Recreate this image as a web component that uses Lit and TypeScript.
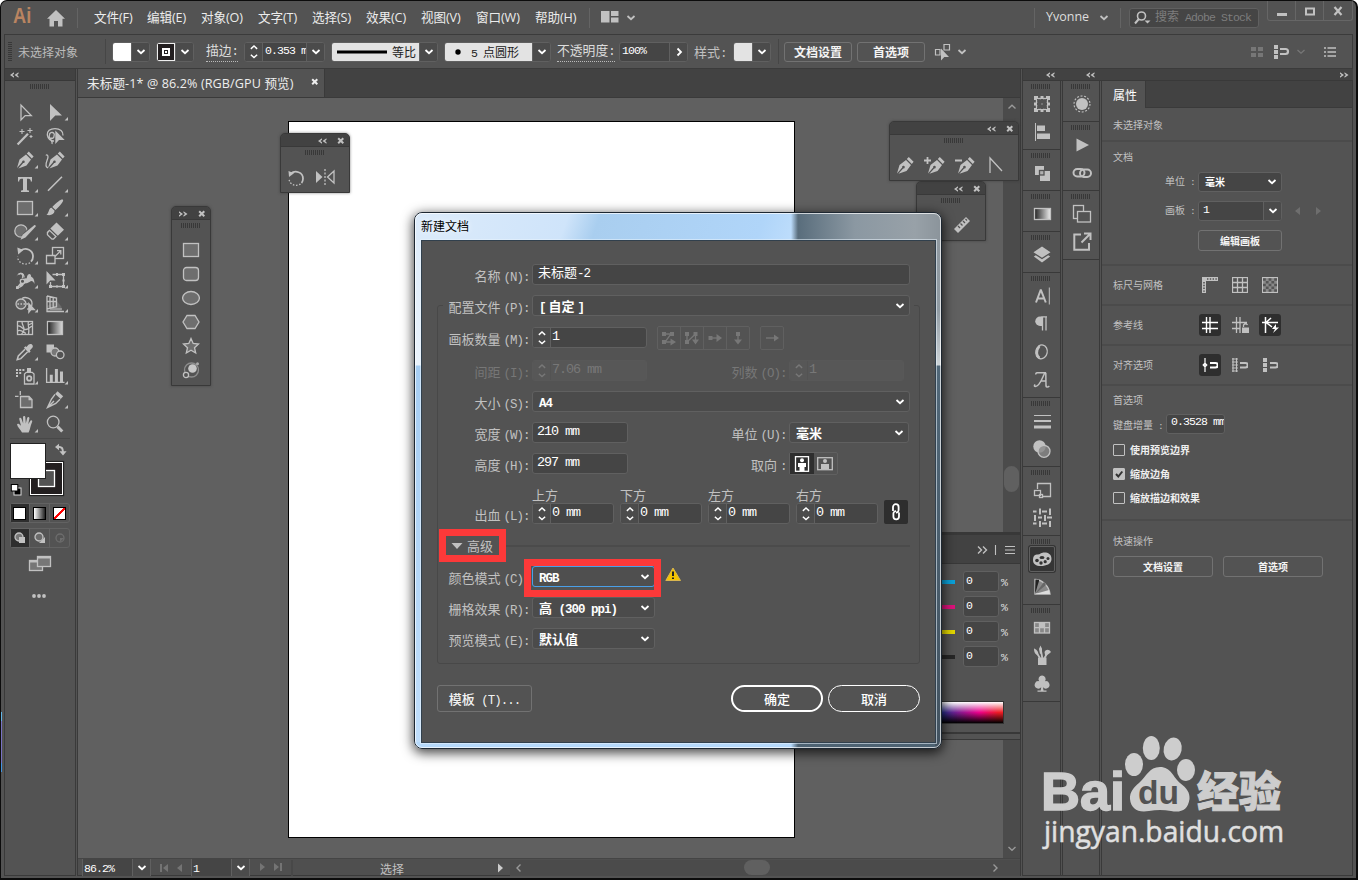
import { LitElement, html, svg, css, SVGTemplateResult } from "lit";
import { customElement, property } from "lit/decorators.js";

// Splits mixed text so that Latin runs take half the width of a CJK glyph.
const t = (s: string) =>
  s.split(/([\x20-\x7e]+)/).filter(Boolean).map((p) =>
    /^[\x20-\x7e]/.test(p) ? html`<span class="l">${p}</span>` : p);

const pic = (w: number, h: number, body: SVGTemplateResult, cls = "") =>
  html`<svg class=${cls} width=${w} height=${h} viewBox="0 0 ${w} ${h}" fill="none" stroke="currentColor" stroke-width="1.3">${body}</svg>`;

const F = (d: string) => svg`<path d=${d} fill="currentColor" stroke="none"/>`;
const S = (d: string, w = 1.3) => svg`<path d=${d} stroke-width=${w}/>`;

const chev = (dir = "down", bold = 1.8) => {
  const d = { down: "M1.5 3L5 6.2L8.5 3", up: "M1.5 6.5L5 3.3L8.5 6.5", right: "M3.5 1.5L7 5L3.5 8.5", left: "M6.5 1.5L3 5L6.5 8.5" }[dir] as string;
  return pic(10, 10, S(d, bold), "chev");
};
const dbl = (right = false) => pic(9, 6, F(right
  ? "M0 .3L4 3L0 5.7V4.2L1.5 3L0 1.8ZM4.5 .3L8.5 3L4.5 5.7V4.2L6 3L4.5 1.8Z"
  : "M4 .3L0 3L4 5.7V4.2L2.5 3L4 1.8ZM8.5 .3L4.5 3L8.5 5.7V4.2L7 3L8.5 1.8Z"));
const cross = pic(8, 8, S("M1.2 1.2L6.3 6.3M6.3 1.2L1.2 6.3", 2));

const shared = css`
  :host { box-sizing: border-box; font-family: "Noto Sans CJK SC", sans-serif; color: #c1c1c1; }
  *, *::before, *::after { box-sizing: border-box; }
  svg { display: block; flex: none; }
  .l { font-family: "Liberation Mono", monospace; font-size: 0.96em; letter-spacing: -0.079em; white-space: pre; }
  .grip { width: 20px; height: 5px; background: repeating-linear-gradient(90deg, #383838 0 1px, transparent 1px 2px); }
  .field { display: flex; align-items: center; height: 21px; border: 1px solid #606060; border-radius: 3px; background: #454545; color: #fff; white-space: nowrap; overflow: hidden; }
  .field > .txt { flex: 1; padding-left: 4px; line-height: 14px; margin-top: -5px; overflow: hidden; }
  .field > .arrow { width: 18px; align-self: stretch; display: flex; align-items: center; justify-content: center; border-left: 1px solid #606060; background: #4b4b4b; }
  .spin { width: 18px; align-self: stretch; display: flex; flex-direction: column; align-items: center; justify-content: center; border-right: 1px solid #606060; background: #4b4b4b; }
  .spin svg { height: 9px; }
`;

const spin = html`<span class="spin">${chev("up", 1.6)}${chev("down", 1.6)}</span>`;

const pen = "M1 17.5L3.5 9L10 4L15 9L10.5 15L2.4 17.8L7.2 12.4A1.3 1.3 0 1 0 6.2 11.5ZM10.8 3L12.8 1L17.6 5.8L15.8 8Z";

const corner = F("M28 17V20.4H24.6Z");
const tools: Array<[SVGTemplateResult, boolean]> = [
  [S("M11 5V20L15.2 15.6H21.3Z"), false],
  [F("M10 4V21L15.3 15.5H22Z"), true],
  [svg`${S("M7.6 20.4L18 9.8", 2.2)}${S("M12 5V10M9.5 7.5H14.5M20 4V9M17.5 6.5H22.5M21 11V14M19.5 12.5H22.5", 1.1)}`, false],
  [svg`${S("M14 17C11 17 8 15 7.3 11C7 7 10 4.7 15 4.7C20 4.7 23.5 7.5 23 11.5M14 12A2.4 2.4 0 1 1 9.5 11A2.4 2.4 0 1 1 14 12C13.5 16 11 13 10.5 14.5C10.4 17 13 17 12 20")}${F("M15.3 6.5V20L19 16H24.7Z")}`, false],
  [svg`<g transform="translate(6 2.6)">${F(pen)}</g>`, true],
  [svg`<g transform="translate(7 2.6)">${F(pen)}</g>${S("M8 20C3 18 8 12 8 9C8 6.8 6.6 6.5 6 7.5")}`, false],
  [F("M8 5H22V9.5H20.8C20.7 7.3 20 6.8 17 6.8V17.6C17 18.4 17.5 18.5 19 18.6V20H11V18.6C12.5 18.5 13 18.4 13 17.6V6.8C10 6.8 9.3 7.3 9.2 9.5H8Z"), true],
  [S("M8 18.8L22 4.8", 1.6), true],
  [svg`<rect x="7.5" y="5.5" width="15" height="13" fill="#6e6e6e"/>`, true],
  [F("M22.8 3.6C24 4.5 22.5 7.5 15.5 14L12.3 11C17.5 5.5 21.5 2.8 22.8 3.6ZM11.5 11.8L14.6 14.8C14.2 18.5 10.5 20 6.5 18.8C9 17.5 8.5 12.2 11.5 11.8Z"), true],
  [svg`<circle cx="11" cy="11" r="6.2" fill="#6e6e6e"/><path d="M26 5L13.5 17.5" stroke="#535353" stroke-width="6"/>${F("M24.5 5C25.8 4.8 26 6 25.5 6.8L15.5 17.5L10.5 19.8L12.6 14.8Z")}`, true],
  [F("M16.5 2.5L24 9.8L17.8 15.8L10.3 8.5ZM9.5 9.4L16.9 16.6L13.7 19.7H11.7L6.8 14.9V12Z M9.6 11.2L8.1 13L8.1 14.4L12.2 18.4L13.3 18.2L15 16.6Z"), true],
  [svg`${S("M11 6.2C16 3 23 6 23 12.4C23 14.7 22.3 16.3 21 17.7", 1.8)}<path d="M20 18.8C15 22 7.6 19 7.6 12.5" stroke-dasharray="1.5 1.8"/>${F("M7.3 3.4L13.5 6L8.2 10.6Z")}`, true],
  [svg`<rect x="12.5" y="3.5" width="11" height="11"/><path d="M6.5 11.5H15V19.5H6.5Z" fill="#535353"/>${S("M15 12.5L20.5 7M17 6.6H20.8V10.5")}`, true],
  [svg`${S("M7.5 19.5L13 12.500M8.500 6.500C11.500 4 14 7 12.500 10", 1.6)}${F("M6.500 8.500C8 4 13.500 3 14.500 8C15 11 16.500 11.500 17 9C17.500 5 21.500 5 21 8.500C23 9.500 24.500 11 24.500 16C22.800 12.500 21.500 12.500 19.500 14C16.500 16 14.500 14.500 13.500 17C12.500 19 9 20.500 7.500 20.300C10 18.800 10.300 17 10 15.500L15 10L12 6C9.500 5.500 8 6.500 6.500 8.500Z")}<circle cx="12.500" cy="13.300" r="2.2" fill="#535353"/>${F("M6 18.200H8.800V21H6Z")}`, true],
  [svg`${F("M6.5 3V16.5L10.2 12.5H15.5Z")}${S("M12.5 6.5H23.5V18.5H10.5V14")}${F("M22 5H25V8H22ZM22 17H25V20H22ZM9 17H12V20H9ZM16 5H18V8H16ZM16 17.5H18V19.5H16ZM22.5 11.5H24.5V13.5H22.5Z")}`, true],
  [svg`<circle cx="11" cy="12" r="5" fill="#666"/><path d="M12 6.5C15 4.3 22 6 22 11.5C22 15 20 17 17 17.2"/><path d="M7.5 12H19" stroke-dasharray="1.5 1.5"/>${F("M18.2 10V22L21.3 18.2H25.8Z")}`, true],
  [svg`<path d="M16.5 8.5L21.5 14.7V19.5H7V14Z" fill="#6b6b6b" stroke="none"/>${S("M7 4V19.5H24M7 4L16.5 6V14.7L7 16.8M10 4.8V16M13.2 5.4V15.4M7 9.5H16.5")}${S("M10 17H22", 1)}`, true],
  [svg`<rect x="7.5" y="5.5" width="15" height="13"/>${S("M12 5.5C12 9 14 10 14 13.5S11.5 17 11.5 18.5M18.5 5.5C17 8 20 12 18.5 18.5M7.5 10C12 9 12 14 16 13.5S20 10 22.5 10.5M7.5 15C11 13 13 16 16 17.5M18.5 9L22.5 7")}`, false],
  [svg`<rect x="7.5" y="5.5" width="15" height="13" fill="url(#gg)"/><defs><linearGradient id="gg"><stop stop-color="#222"/><stop offset="1" stop-color="#ddd"/></linearGradient></defs>`, false],
  [svg`${F("M18.4 4.8C20.8 2.5 24 5 22.5 7.6L19.8 10.4L20.6 11.4L19 13L13.9 7.8L15.5 6.3L16.5 7Z")}${S("M15 9.2L8.3 16L7.2 19.7L10.8 18.6L17.7 11.7", 1.5)}`, true],
  [svg`${F("M6.5 4.5H14V8L10.5 12.5H6.5Z")}<circle cx="15" cy="12" r="4" fill="#777"/><circle cx="20.2" cy="14.8" r="3.8" fill="#535353"/>`, false],
  [svg`${F("M6 5H8V7H6ZM9.2 5H11.2V7H9.2ZM12.4 5H14.4V7H12.4ZM6 8H8V10H6ZM9.2 8H11.2V10H9.2ZM6 11H8V13H6ZM17 4H21V8H17Z")}<path d="M14.5 20V10L16.3 8.3H22.2L24 10V20Z"/><circle cx="19.2" cy="14.4" r="2.2" stroke-width="1.8"/>`, true],
  [svg`${S("M6.6 4V18.4H24.5")}${F("M9.8 10.8H12.8V18H9.8ZM14.9 5H17.9V18H14.9ZM20 7.5H23V18H20Z")}`, true],
  [svg`${S("M10.3 3V7M5 8.4H8.5", 1.3)}<path d="M10.5 8.5H19L22 11.5V19.5H10.5Z" fill="#6e6e6e"/>${F("M18.5 8V12.3H22.5Z")}`, false],
  [svg`${F("M17.5 3.2L23.2 8.3L20.7 11L15.2 6Z")}${S("M15 6.4L11.5 11L7.5 19.5L15.8 15.5L20 11.2M8 19L14 13", 1.4)}`, true],
  [F("M12 20.5C10.8 17.8 7.5 15 7 12.5C7.3 11.2 9 11.3 11 13.8L9.2 7C9.2 5.4 11 5.4 11.4 6.6L13.2 11.6L13 5C13.2 3.5 15.2 3.5 15.3 5L15.8 11.4L17.3 5.6C18 4.4 19.6 4.9 19.4 6.4L18.2 12.2L20.4 8.8C21.5 7.7 22.8 8.8 22 10.2C20.5 13.5 20.3 17 18.6 20.5Z"), true],
  [svg`<circle cx="13.2" cy="10" r="5.8"/>${S("M17.5 14.6L22.3 19.5", 3)}`, false],
];

@customElement("tool-panel")
class ToolPanel extends LitElement {
  static styles = [shared, css`
    :host { display: flex; flex-direction: column; width: 72px; background: #535353; border: 1px solid #3a3a3a; border-top: none; }
    .head { height: 12px; background: #424242; border-bottom: 1px solid #383838; padding: 3px 5px; flex: none; }
    .grip { margin: 3px 0 11px 25px; flex: none; }
    .tools { display: grid; grid-template-columns: 30px 30px; grid-auto-rows: 24px; margin-left: 5px; }
    .rule { height: 1px; background: #484848; margin: 2px 5px 4px; flex: none; }
    .colors { height: 60px; margin-left: 5px; flex: none; }
    .trio { display: grid; grid-template-columns: 19px 20px 19px; height: 20px; margin: 0 0 5px 5px; width: 60px; border: 1px solid #626262; border-radius: 3px; flex: none; }
    .trio > span { display: flex; align-items: center; justify-content: center; border-right: 1px solid #626262; }
    .trio > span:first-child { background: #2e2e2e; }
    .trio > span:last-child { border: none; }
    .sw { width: 13px; height: 13px; border: 1px solid #000; margin-left: -1px; }
    .white { background: #fff; } .grad { background: linear-gradient(90deg, #fff, #222); }
    .none { background: linear-gradient(135deg, #fff 41%, #f00 41% 59%, #fff 59%); }
    .screen { margin: 2px 0 0 23px; } .more { margin: 20px 0 0 27px; }
  `];
  render() {
    return html`
      <div class="head">${dbl()}</div><div class="grip"></div>
      <div class="tools">${tools.map(([b, c]) => pic(30, 24, svg`${b}${c ? corner : null}`))}</div>
      <div class="rule"></div>
      <div class="colors">${pic(60, 60, svg`
        <rect x="19.5" y="18.5" width="34" height="34" fill="#231f20" stroke="#222"/><rect x="20.5" y="19.5" width="32" height="32" stroke="#fff" stroke-width="1"/>
        <rect x="28.5" y="27.5" width="16" height="16" fill="#535353" stroke="#fff"/>
        <rect x=".5" y=".5" width="35" height="35" fill="#fff" stroke="#222" stroke-width="1"/>
        <path d="M47.5 3.8C52 3.8 53 5 53 10" stroke-width="2"/>${F("M45 4L49 .8V7.2ZM53 12.4L49.4 8.3H56.6Z")}
        <rect x="4" y="45" width="7" height="7" fill="#000" stroke="#ddd" stroke-width="1"/><rect x="1.3" y="41.5" width="6.5" height="6.5" fill="#fff" stroke="#000" stroke-width="1"/>`)}</div>
      <div class="trio"><span><i class="sw white"></i></span><span><i class="sw grad"></i></span><span><i class="sw none"></i></span></div>
      <div class="trio">
        <span>${pic(12, 12, svg`<circle cx="5" cy="5" r="4" fill="#777"/>${F("M5 5H11V11H5Z")}`)}</span>
        <span>${pic(12, 12, svg`${F("M5 11L11 5V11Z")}<circle cx="5" cy="5" r="4" fill="#6b6b6b"/>`)}</span>
        <span>${pic(12, 12, svg`<circle cx="6" cy="6" r="4" stroke="#6d6d6d"/><path d="M6 6H10L6 10Z" fill="#6d6d6d" stroke="none"/>`)}</span>
      </div>
      ${pic(24, 18, svg`<rect x="1.5" y="5.5" width="13" height="10" fill="#777"/><path d="M1 6.5H15" stroke-width="2"/><rect x="9.5" y="1.5" width="13" height="10" fill="#777"/><path d="M9 2.5H23" stroke-width="2"/>`, "screen")}
      ${pic(16, 6, svg`${[2, 7, 12].map((x) => svg`<circle cx=${x} cy="3" r="1.9" fill="currentColor" stroke="none"/>`)}`, "more")}`;
  }
}

const iA: SVGTemplateResult[][] = [
  [
    svg`<rect x="8.5" y="8.5" width="11" height="11"/>${F("M6 6H10V10H6ZM12.5 6H15.5V10H12.5ZM18 6H22V10H18ZM6 12.5H10V15.5H6ZM18 12.5H22V15.5H18ZM6 18H10V22H6ZM12.5 18H15.5V22H12.5ZM18 18H22V22H18ZM13.4 13.4H14.6V14.6H13.4Z")}<g fill="#535353" stroke="none"><path d="M9 9H10V10H9ZM12.500 9H15.500V10H12.500ZM18 9H19V10H18ZM9 12.500H10V15.500H9ZM18 12.500H19V15.500H18ZM9 18H10V19H9ZM12.500 18H15.500V19H12.500ZM18 18H19V19H18Z"/></g>`,
    svg`${S("M7.5 5V23", 1)}${F("M9 7.5H17V13H9ZM9 15.5H22V21H9Z")}`,
  ],
  [svg`${F("M7 7H16V16H7ZM12 12H22V22H12Z")}<rect x="11.5" y="11.5" width="4.5" height="4.5" fill="#b0b0b0" stroke="#535353"/>`],
  [svg`<defs><linearGradient id="ga"><stop stop-color="#222"/><stop offset="1" stop-color="#eee"/></linearGradient></defs><rect x="6.5" y="8.5" width="16" height="11" fill="url(#ga)"/>`],
  [F("M14 5.5L22.5 11.2L14 16.8L5.5 11.2ZM5.8 15.5L7.8 14.2L14 18.2L20.2 14.2L22.2 15.5L14 21.5Z")],
  [
    svg`<path d="M8 20.5L12.6 8.2H13L17.8 20.5M9.5 16.5H16.5" stroke-width="2"/>${S("M21.3 5.5V22.5", 1)}`,
    svg`${F("M12 6.5A4.7 4.7 0 0 0 12 16H14V6.5Z")}${S("M13.5 6.8H19M14.5 7V20.5M18 7V20.5", 1.3)}`,
    svg`<ellipse cx="13.5" cy="14" rx="5.7" ry="7" transform="rotate(12 14 14)" stroke-width="1.3"/><path d="M11.5 8C7.5 13 8.500 18 11.500 20" stroke-width="2.4"/>`,
    svg`${S("M8 8.5C7 5.8 12 6.8 18 6.8M17.8 6.8L18 20C18.3 21.5 20 21.4 21.3 20M16.8 7C14 12 12 20.5 7.3 20.5C6 20.5 6.2 19 7.3 18.8M12.5 15H18", 1.5)}`,
  ],
  [
    svg`${S("M6 8.5H23", 1)}${S("M6 14H23", 2)}${S("M6 20H23", 3)}`,
    svg`<circle cx="11.5" cy="11.5" r="6.2" fill="currentColor" stroke="none"/><circle cx="16" cy="16.3" r="6" fill="#888" fill-opacity=".8"/>`,
  ],
  [
    svg`${S("M9.5 13V7.5H22.5V20.5H15")}<rect x="6.5" y="14.5" width="6" height="5"/><rect x="11.5" y="18.5" width="3" height="3"/>`,
    svg`${S("M12 4.5V10.5M22 4.5V11M7 11V17M17 11V17M12 17V23M22 17V23", 2)}${S("M5 7.5H8.5M14 7.5H19M5 19.5H8.5M14 19.5H19M10 13.5H14M19 13.5H24", 1.8)}`,
  ],
  [
    svg`${F("M5 15C5 8 10 10 12 9C14 7 23.5 6 23.5 14C23.5 19 18 21 13 21C8 21 5 19 5 15Z")}<g fill="#333" stroke="none"><circle cx="9" cy="15.5" r="1.8"/><circle cx="13" cy="18" r="1.7"/><circle cx="17.2" cy="16.7" r="1.6"/><circle cx="20" cy="13.5" r="1.5"/><ellipse cx="14" cy="12.5" rx="2.5" ry="1.5"/></g>`,
    svg`<path d="M7 21V6.5C14 6.5 21 13 22 21Z" fill="#888"/><path d="M7 21L11 8V6.8L7.5 6.5Z" fill="#222" stroke="none"/><path d="M7 21L18 12L16 9Z" fill="#666" stroke="none"/><path d="M7 21L21 17L22 21Z" fill="#ddd" stroke="none"/>`,
  ],
  [
    svg`<rect x="6.5" y="8.5" width="15" height="10.5" fill="#888"/>${S("M11.5 8.5V19M16.5 8.5V19M6.5 13.7H21.5")}${F("M11.5 8.5H16.5V13.5H11.5Z")}`,
    svg`${F("M10 15.5H18.5V23H10Z")}${S("M12 16L8 10M14.3 16L12.5 6M16.5 16L20 10", 1.8)}${F("M6 6.500C8 7 10.500 9 10.500 13C7 13 6 10 6 6.500ZM11 7L12.5 3.500L14 7V11L12 12ZM16.500 10C18 7 21 7 23 10C21 12 18 14 17 13Z")}`,
    F("M14 5.5A3.6 3.6 0 0 1 17 11.2A3.7 3.7 0 1 1 15 17.2L15.5 20.5H18.5V21.7H9.5V20.5H12.7L13.2 17.2A3.7 3.7 0 1 1 11.2 11.2A3.6 3.6 0 0 1 14 5.5Z"),
  ],
];
const iB: SVGTemplateResult[][] = [
  [svg`<circle cx="14" cy="14" r="6" fill="currentColor" stroke="none"/><circle cx="14" cy="14" r="8" stroke-dasharray="2 1.6" stroke-width="1.1"/>`],
  [
    F("M8.5 7.5L21 14L8.5 20.5Z"),
    svg`<g stroke-width="2"><rect x="5.5" y="10" width="11" height="7.500" rx="3.7"/><rect x="12" y="10.5" width="11" height="7.500" rx="3.7"/></g>`,
  ],
  [
    svg`<rect x="5.5" y="5.5" width="10" height="13"/><rect x="9.5" y="11.5" width="13" height="10.5" fill="#535353"/>`,
    svg`${S("M13 6.5H6.3V21.8H21V15", 2)}${S("M13.5 14.5L21.5 6.5M16 5.5H22.5V12", 2)}`,
  ],
];

@customElement("icon-dock")
class IconDock extends LitElement {
  @property({ attribute: false }) groups: SVGTemplateResult[][] = [];
  @property({ type: Number }) active = -1;
  static styles = [shared, css`
    :host { display: block; background: #535353; border-right: 1px solid #393939; }
    .g { border-bottom: 1px solid #393939; padding: 3px 0 3px 8px; }
    .g > .grip { margin-bottom: 1px; }
    .g > svg { margin-left: -3px; }
    .g .on { background: #353535; outline: 1px solid #606060; outline-offset: -2px; border-radius: 3px; }
  `];
  render() {
    return html`${this.groups.map((g, i) => html`<div class="g"><div class="grip"></div>${g.map((b, j) => pic(28, 28, b, i === this.active && j === 0 ? "on" : ""))}</div>`)}`;
  }
}

@customElement("props-panel")
class PropsPanel extends LitElement {
  static styles = [shared, css`
    :host { display: block; background: #535353; font-size: 10px; line-height: 14px; border-right: 1px solid #3a3a3a; border-left: 1px solid #3a3a3a; }
    .tabs { height: 27px; background: #424242; border-bottom: 1px solid #3a3a3a; }
    .tab { width: 44px; height: 27px; background: #535353; border-right: 1px solid #3a3a3a; color: #fff; font-size: 12px; line-height: 27px; padding-left: 11px; }
    section { padding-left: 11px; border-bottom: 2px solid #4b4b4b; }
    section:last-child { border: none; }
    .r { display: flex; align-items: center; }
    .s1 { height: 34px; padding-top: 10px; } .s2 { height: 124px; padding-top: 8px; }
    .row { height: 40px; } .row > span:first-child { width: 86px; }
    .lab { width: 82px; text-align: right; margin-right: 3px; }
    .field { height: 20px; width: 84px; font-size: 12px; } .field b { font-size: 10px; flex: 1; padding-left: 6px; }
    .field > .chev { margin-right: 4px; }
    .m8 { margin-top: 8px; } .m9 { margin-top: 9px; }
    .btn { height: 21px; border: 1px solid #727272; border-radius: 3px; color: #f4f4f4; font-weight: bold; text-align: center; line-height: 19px; }
    .edit { width: 84px; margin: 9px 0 0 85px; }
    .nav { color: #6e6e6e; margin-left: 10px; }
    .ib { width: 22px; height: 22px; margin-right: 8px; display: flex; align-items: center; justify-content: center; border-radius: 3px; }
    .dark { background: #2e2e2e; color: #fff; }
    .s6 { height: 135px; padding-top: 7px; } .kb { margin-top: 6px; } .kb > span { padding-top: 5px; } .kb .field { width: 59px; margin-left: 3px; }
    .ck { color: #eee; font-weight: bold; height: 24px; gap: 5px; }
    .ck i { width: 12px; height: 12px; border: 1px solid #c1c1c1; border-radius: 1px; } .ck .yes { background: #c1c1c1; color: #333; }
    .first { margin-top: 4px; } .s7 { padding-top: 13px; } .pair { gap: 10px; margin-top: 8px; } .pair .btn { width: 100px; }
  `];
  render() {
    const mag = svg`${S("M8 5H13.5A2 2 0 0 1 13.5 9.5H8", 2.2)}`;
    return html`
      <div class="tabs"><div class="tab">属性</div></div>
      <section class="s1">未选择对象</section>
      <section class="s2">文档
        <div class="r m8"><span class="lab">${t("单位 :")}</span><div class="field"><b>毫米</b>${chev()}</div></div>
        <div class="r m9"><span class="lab">${t("画板 :")}</span><div class="field"><span class="txt">${t("1")}</span><span class="arrow">${chev()}</span></div>
          ${pic(32, 10, F("M8 1V9L3 5ZM24 1V9L29 5Z"), "nav")}</div>
        <div class="btn edit">编辑画板</div>
      </section>
      <section class="r row"><span>标尺与网格</span>
        <span class="ib">${pic(16, 16, svg`${S("M0 2H16M2 0V16", 4)}<path d="M5 2H16M2 5V16" stroke="#535353" stroke-width="1.6" stroke-dasharray="1.4 1.4"/>`)}</span>
        <span class="ib">${pic(16, 16, svg`<rect x=".5" y=".5" width="15" height="15"/>${S("M5.5 0V16M10.5 0V16M0 5.5H16M0 10.5H16")}`)}</span>
        <span class="ib">${pic(16, 16, svg`<rect x=".5" y=".5" width="15" height="15" fill="#8a8a8a"/><path d="M1 2.500H15M1 8H15M1 13.500H15" stroke="#555" stroke-width="2.7" stroke-dasharray="2.8 2.8"/><path d="M3.800 5.250H15M3.800 10.750H15" stroke="#555" stroke-width="2.7" stroke-dasharray="2.8 2.8"/>`)}</span></section>
      <section class="r row"><span>参考线</span>
        <span class="ib dark">${pic(16, 16, S("M0 5.5H16M0 11.5H16M4.5 0V16M8 0V16", 1.4))}</span>
        <span class="ib">${pic(17, 16, svg`${S("M0 5.5H15M0 11.5H8M4.5 0V16M8 0V16M11.5 10V8Q14 5.5 15.5 8")}${F("M10 10.5H17V16.5H10Z")}`)}</span>
        <span class="ib dark">${pic(17, 16, svg`${S("M0 5.5H16M3.5 0V16M4 5.5L9 1M4 5.5L10 10", 1.5)}${F("M14 7L10 12H13L11 16L17 10.5H14Z")}`)}</span></section>
      <section class="r row"><span>对齐选项</span>
        <span class="ib dark">${pic(16, 14, svg`${mag}${S("M3 0V14M1.2 7L3 5.2L4.8 7L3 8.800Z", 1.2)}`)}</span>
        <span class="ib">${pic(16, 14, svg`${mag}${S("M1 0V14M4.5 0V14M0 1H6M0 4H6M0 7H6M0 10H6M0 13H6", 1.1)}`)}</span>
        <span class="ib">${pic(16, 14, svg`${mag}${F("M1 0H5V4H1ZM1 5H5V9H1ZM1 10H5V14H1Z")}`)}</span></section>
      <section class="s6">首选项
        <div class="r kb"><span>${t("键盘增量 :")}</span><div class="field"><span class="txt">${t("0.3528 mm")}</span></div></div>
        <div class="r ck first"><i></i>使用预览边界</div>
        <div class="r ck"><i class="yes">${pic(10, 10, S("M2 5L4.3 7.5L8.3 2.5", 2))}</i>缩放边角</div>
        <div class="r ck"><i></i>缩放描边和效果</div>
      </section>
      <section class="s7">快速操作<div class="r pair"><div class="btn">文档设置</div><div class="btn">首选项</div></div></section>`;
  }
}

@customElement("float-panel")
class FloatPanel extends LitElement {
  @property({ type: Boolean }) right = false;
  static styles = [shared, css`
    :host { display: block; background: #535353; border: 1px solid #393939; border-radius: 5px 5px 0 0; box-shadow: 0 0 3px #3339; }
    .h { height: 13px; background: #424242; border-bottom: 1px solid #393939; border-radius: 4px 4px 0 0; display: flex; align-items: center; justify-content: flex-end; gap: 10px; padding: 1px 4px 0 0; }
    .grip { margin: 3px auto 0; }
  `];
  render() { return html`<div class="h">${dbl(this.right)}${cross}</div><div class="grip"></div><slot></slot>`; }
}

@customElement("new-doc-dialog")
class NewDocDialog extends LitElement {
  static styles = [shared, css`
    :host { display: block; border: 1px solid #1d2731; border-radius: 8px; box-shadow: 0 3px 12px 1px #000b; padding: 27px 5px 5px 6px; font-size: 13px;
      background:
        linear-gradient(180deg, #8f989f 0, #909ba3 70px, #ccd3d7 125px, #516879 126px, #41515e 100%) right 0 top 27px / 6px 100% no-repeat,
        linear-gradient(90deg, #b5d9fb 0 376px, #4e6373 383px) bottom / 100% 6px no-repeat,
        linear-gradient(90deg, #fff0 376px, #596d7c 383px, #8b98a2 440px, #98a1a8 500px, #8b949b) 0 0 / 100% 27px no-repeat,
        linear-gradient(110deg, #dcebfa 0, #cfe4fa 145px, #a9ceef 175px, #b0d5f9 330px, #c1dffc 372px) 0 0 / 100% 27px no-repeat,
        linear-gradient(180deg, #dcebfa 0, #eaf3fc 152px, #a6cdf2 153px, #c0defb 100%); }
    .title { position: absolute; left: 6px; top: 4px; color: #000; font-size: 12px; line-height: 18px; text-shadow: 0 0 6px #fff; }
    .frame { position: absolute; inset: 0; border: 1px solid #ffffffb0; border-radius: 7px; }
    .body { position: relative; height: 503px; border: 1px solid #31404d; background: #535353; outline: 1px solid #e8f3fc90; padding: 23px 0 0 15px; }
    .row { display: flex; align-items: center; height: 21px; white-space: nowrap; }
    .row > .lab { width: 94px; text-align: right; padding: 1px 2.5px 0 0; flex: none; }
    .lab .l, .tight .l { word-spacing: -3.5px; }
    .row.name > .lab { width: 95px; }
    .name > .field { width: 378px; } .name > .field > .txt { line-height: 19px; margin-top: -3px; font-size: 13px; padding-left: 5px; }
    fieldset { margin: 20px 0 0; padding: 0; width: 483px; height: 359px; border: 1px solid #484848; border-radius: 3px; min-width: 0; }
    .field > .txt { font-size: 14px; } .field > .spin + .txt { padding-left: 1px; }
    .sel { background: #4b4b4b; font-weight: bold; padding: 0 4px 0 6px; justify-content: space-between; }
    .w1 { width: 378px; } .w2 { width: 115px; } .w3 { width: 96px; } .w4 { width: 82px; } .w5 { width: 120px; } .w6 { width: 123px; }
    .profile { margin: -11px 5px 0; background: #535353; } .row.profile > .lab { width: 89px; }
    .g11 { margin-top: 11px; } .g12 { margin-top: 12px; } .g10 { margin-top: 10px; }
    .dis { color: #777; border-color: #585858; background: #575757; } .dis .spin { background: #575757; border-color: #535353; }
    .lab.off { color: #777; }
    .order { display: flex; margin-left: 10px; border: 1px solid #606060; border-radius: 2px; height: 24px; color: #777; }
    .order > span { width: 23px; border-right: 1px solid #606060; display: flex; align-items: center; justify-content: center; } .order > span:last-child { border: 0; width: 22px; }
    .row > .lab.right { width: 142px; } .row > .lab.far { width: 161px; }
    .ori { display: flex; border: 1px solid #606060; border-radius: 2px; height: 23px; } .ori span { width: 23.5px; display: flex; align-items: center; justify-content: center; }
    .ori span:first-child { background: #2e2e2e; color: #fff; }
    .sides { display: flex; margin: 13px 0 0 94px; height: 16px; line-height: 15px; } .sides span { width: 88px; }
    .bleed > .field { margin-right: 6px; } .link { width: 24px; height: 24px; background: #2e2e2e; border-radius: 2px; color: #fff; display: flex; align-items: center; justify-content: center; margin-top: -4px; }
    .adv { display: flex; align-items: center; height: 33px; margin: 5px 9px 0 1px; } .adv::after { content: ""; flex: 1; height: 2px; background: #4b4b4b; }
    .adv > span { width: 67px; height: 33px; border: 7px solid #fc3939; display: flex; align-items: center; gap: 4px; padding-left: 5px; line-height: 18px; }
    .hot { position: relative; margin-top: 4px; } .hot::after { content: ""; position: absolute; left: 86px; top: -7px; width: 137px; height: 38px; border: 7px solid #fc3939; }
    .hot .field { border: 1.5px solid #4a9fe8; background: #4f4f4f; } .warn { margin: -4px 0 0 10px; }
    .foot { display: flex; margin-top: 21px; width: 483px; color: #fff; line-height: 25px; text-align: center; font-weight: 500; }
    .foot > * { height: 27px; } .tpl { width: 95px; border: 1px solid #727272; border-radius: 3px; margin-right: auto; color: #f2f2f2; }
    .pill { width: 92px; border: 1px solid #fff; border-radius: 14px; margin-left: 5px; } .ok { border-width: 2px; line-height: 23px; }
  `];
  render() {
    const num = (v: string, w: string, off = false) => html`<div class="field ${w} ${off ? "dis" : ""}">${spin}<span class="txt">${t(v)}</span></div>`;
    const sel = (v: string, w: string) => html`<div class="field sel ${w}"><span>${t(v)}</span>${chev()}</div>`;
    const lab = (s: string, c = "") => html`<span class="lab ${c}">${t(s)}</span>`;
    return html`
      <div class="frame"></div><div class="title">新建文档</div>
      <div class="body">
        <div class="row name">${lab("名称 (N):")}<div class="field"><span class="txt">${t("未标题-2")}</span></div></div>
        <fieldset>
          <div class="row profile">${lab("配置文件 (P):")}${sel("[ 自定 ]", "w1 tight")}</div>
          <div class="row g11">${lab("画板数量 (M):")}${num("1", "w2")}
            <div class="order">
              <span>${pic(16, 16, svg`${F("M1 2H5V6H1ZM9 2H13V6H9ZM1 10H5V14H1ZM9.5 8.5L15 12L9.5 15.5Z")}${S("M4 4H10L4 12H10")}`)}</span>
              <span>${pic(16, 16, svg`${F("M1 2H5V6H1ZM9.5 2H13.5V6H9.5ZM1 10H5V14H1ZM8 9.5H15L11.5 14.5Z")}${S("M3 4V12M4 11L11.5 4V10")}`)}</span>
              <span>${pic(16, 16, svg`${F("M1.5 6H5.5V10H1.5ZM9.5 4L15 8L9.5 12Z")}${S("M4 8H11")}`)}</span>
              <span>${pic(16, 16, svg`${F("M6 2H10V6H6ZM4 9.5H12L8 14.5Z")}${S("M8 4V11")}`)}</span></div>
            <div class="order"><span>${pic(14, 14, svg`${F("M9 3.5L14 7L9 10.5Z")}${S("M1 7H11")}`)}</span></div>
          </div>
          <div class="row g12">${lab("间距 (I):", "off")}${num("7.06 mm", "w2", true)}${lab("列数 (O):", "right off")}${num("1", "w2", true)}</div>
          <div class="row g10">${lab("大小 (S):")}${sel("A4", "w1")}</div>
          <div class="row g10">${lab("宽度 (W):")}<div class="field w3"><span class="txt">${t("210 mm")}</span></div>${lab("单位 (U):", "far")}${sel("毫米", "w5")}</div>
          <div class="row g10">${lab("高度 (H):")}<div class="field w3"><span class="txt">${t("297 mm")}</span></div>${lab("取向 :", "far")}
            <div class="ori"><span>${pic(16, 16, svg`<rect x="1.5" y=".7" width="13" height="14.6"/><circle cx="8" cy="4.2" r="2" fill="currentColor" stroke="none"/>${F("M4 7H12V11H10.5V15H5.5V11H4Z")}`)}</span>
            <span>${pic(16, 16, svg`<rect x=".7" y="1.7" width="14.6" height="12"/><circle cx="8" cy="5" r="2" fill="currentColor" stroke="none"/>${F("M4 8H12V13H4Z")}`)}</span></div></div>
          <div class="sides"><span>上方</span><span>下方</span><span>左方</span><span>右方</span></div>
          <div class="row bleed">${lab("出血 (L):")}${[0, 1, 2, 3].map(() => num("0 mm", "w4"))}
            <span class="link">${pic(12, 18, svg`<g stroke-width="1.8"><path d="M3 8V4A2.8 2.8 0 0 1 8.6 4V7A2.5 2.5 0 0 1 6 9.5M9 9.5V13.5A2.8 2.8 0 0 1 3.4 13.5V11A2.5 2.5 0 0 1 6 8.2"/></g>`)}</span></div>
          <div class="adv"><span>${pic(12, 8, F("M.5 1H11.5L6 7Z"))}高级</span></div>
          <div class="row hot">${lab("颜色模式 (C):")}${sel("RGB", "w6")}
            ${pic(17, 15, svg`<path d="M8 1L15.5 13.5H.8Z" fill="#f5c400" stroke="#d9b650" stroke-width="1"/><path d="M8 4.5V9M8 10.5V12" stroke="#222" stroke-width="2"/>`, "warn")}</div>
          <div class="row g10">${lab("栅格效果 (R):")}${sel("高 (300 ppi)", "w6")}</div>
          <div class="row g10">${lab("预览模式 (E):")}${sel("默认值", "w6")}</div>
        </fieldset>
        <div class="foot"><span class="tpl">${t("模板 (T)...")}</span><span class="pill ok">确定</span><span class="pill">取消</span></div>
      </div>`;
  }
}

@customElement("app-root")
class AppRoot extends LitElement {
  static styles = [shared, css`
    :host { display: flex; flex-direction: column; position: relative; width: 1358px; height: 880px; overflow: hidden; background: #535353; border: 1px solid #0c0c0c; border-bottom-width: 2px; border-right-width: 2px; border-radius: 7px 7px 0 0; font-size: 13px; }
    .menu { display: grid; grid-template-columns: 33px 31px 17px 53px 54px 57px 54px 54px 55px 55px 59px 54px 12px 25px 408px 12px 53px 21px 9px 138px 84px; height: 33px; padding-left: 12px; align-items: center; flex: none; }
    .menu .m { font-family: "Open Sans", "Noto Sans CJK SC", sans-serif; color: #ececec; font-size: 12.6px; white-space: nowrap; letter-spacing: -0.1px; margin-top: -3px; }
    .ai { font: bold 22px/30px "Liberation Sans", sans-serif; color: #b98461; transform: scaleX(.83); transform-origin: 0 50%; margin-top: -3px; }
    .vs { width: 1px; height: 20px; background: #646464; }
    .user { color: #ddd; font-family: "Open Sans", sans-serif; font-size: 12.5px; margin-top: -3px; }
    .search { width: 130px; height: 20px; border: 1px solid #606060; border-radius: 3px; background: #454545; display: flex; align-items: center; gap: 4px; padding-left: 4px; font-size: 12px; line-height: 16px; color: #7d7d7d; white-space: nowrap; overflow: hidden; }
    .search svg { color: #c1c1c1; } .search span { margin-top: -1px; }
    .win { align-self: start; display: grid; grid-template-columns: repeat(3, 28px); height: 20px; border: 1px solid #666; border-top: 0; border-radius: 0 0 3px 3px; width: 86px; }
    .win > span { display: flex; align-items: center; justify-content: center; border-right: 1px solid #666; } .win > span:last-child { border: 0; }
    .bar { display: grid; grid-template-columns: 10px 87px 7px 44px 50px 38px 87px 113px 113px 62px 75px 39px 45px 6px 73px 77px 23px 293px 24px 22px 28px 20px; height: 35px; margin: 0 3px; padding-left: 3px; align-items: center; border: 1px solid #3b3b3b; flex: none; white-space: nowrap; }
    .vgrip { width: 4px; height: 20px; background: repeating-linear-gradient(180deg, #383838 0 1px, transparent 1px 2px); }
    .dim { font-size: 12px; color: #bbb; }
    .vd { width: 1px; height: 25px; background: #464646; }
    .dot { color: #ddd; justify-self: start; border-bottom: 1px dotted #bbb; line-height: 17px; font-size: 12.800px; }
    .field { height: 20px; font-size: 12px; } .field > .txt { padding-left: 2px; margin-top: -4px; }
    .c38 { width: 38px; } .c81 { width: 81px; } .c107 { width: 107px; } .c69 { width: 69px; }
    .fill { flex: 1; align-self: stretch; background: #fff; display: flex; align-items: center; justify-content: center; }
    .blk { background: #231f20; border: 1px solid #eee; } .blk i { width: 8px; height: 8px; border: 1px solid #fff; background: #fff; outline: 1px solid #231f20; outline-offset: -3px; }
    .lite { background: #e3e3e3; color: #222; gap: 5px; font-size: 12px; justify-content: flex-end; padding-right: 3px; } .lite.br { gap: 10px; padding-right: 13px; }
    .btn { height: 20px; width: 68px; border: 1px solid #727272; border-radius: 3px; color: #f4f4f4; font-weight: bold; font-size: 12px; text-align: center; line-height: 18px; }
    .work { display: grid; grid-template-columns: 72px 1fr 331px; gap: 1px; margin: 0 3px; height: 807px; flex: none; }
    .doc { display: flex; flex-direction: column; border: 1px solid #3a3a3a; border-top: 0; min-width: 0; }
    .tabs { height: 29px; background: #424242; border-bottom: 1px solid #3a3a3a; flex: none; }
    .tab { width: 247px; height: 28px; background: #535353; border-right: 1px solid #3a3a3a; display: flex; align-items: center; justify-content: space-between; padding: 0 5px 2px 9px; color: #eee; font: 12.6px "Open Sans", "Noto Sans CJK SC", sans-serif; letter-spacing: .1px; white-space: nowrap; }
    .mid { display: flex; flex: 1; min-height: 0; }
    .canvas { position: relative; flex: 1; background: #606060; overflow: hidden; }
    .art { position: absolute; left: 210px; top: 23px; width: 507px; height: 717px; border: 1px solid #000; background: #fff; }
    .vscroll { width: 17px; background: #4b4b4b; display: flex; flex-direction: column; align-items: center; padding: 4px 0; color: #999; }
    .vscroll i { width: 15px; height: 26px; border-radius: 8px; background: #606060; margin: 354px 0 auto; flex: none; }
    .status { display: grid; grid-template-columns: 4px 69px 40px 100px 1fr 17px 510px; height: 17px; border-top: 1px solid #454545; background: #4f4f4f; align-items: center; flex: none; }
    .status .field { height: 17px; width: 69px; border-width: 0 1px; border-radius: 0; } .status .field.p { width: 59px; }
    .status .txt { margin-top: 0; padding-left: 1px; } .status > svg { color: #747474; } .status .mode { text-align: center; border-left: 2px solid #484848; font-size: 12px; padding: 1px 2px 0 0; line-height: 16px; height: 16px; overflow: hidden; }
    .pager { display: flex; } .hs { display: flex; align-items: center; justify-content: space-between; background: #4b4b4b; height: 16px; padding: 0 20px 0 4px; color: #999; } .hs i { width: 26px; height: 15px; border-radius: 8px; background: #606060; }
    .docks { display: flex; flex-direction: column; border: 1px solid #3a3a3a; border-top: 0; border-right: 0; }
    .dh { height: 12px; background: #424242; border-bottom: 1px solid #393939; display: grid; grid-template-columns: 32px 40px 1fr 13px; align-items: center; flex: none; }
    .dh > :nth-child(1), .dh > :nth-child(2) { justify-self: end; }
    .cols { display: grid; grid-template-columns: 38px 1px 38px 1px 1fr; flex: 1; }
    .second { border-left: 1px solid #393939; }
    .floating { position: absolute; }
    .fa { left: 279px; top: 132px; width: 70px; height: 60px; } .fb { left: 170px; top: 205px; width: 40px; height: 180px; } .fc { left: 888px; top: 120px; width: 130px; height: 60px; } .fd { left: 915px; top: 180px; width: 70px; height: 60px; }
    .icons { display: flex; padding: 14px 6px; gap: 10px; } .fc .icons { padding: 13px 6px; gap: 9px; } .fd .icons { padding: 13px 36px; }
    .shapes { display: grid; justify-content: center; grid-auto-rows: 24px; padding-top: 10px; align-items: center; }
    .color { position: absolute; left: 880px; top: 531px; width: 140px; height: 208px; background: #535353; border: 2px solid #383838; border-width: 3px 1px 1px; display: flex; flex-direction: column; }
    .ch { height: 29px; background: #424242; border-bottom: 1px solid #383838; display: flex; align-items: center; justify-content: flex-end; padding: 2px 3px 0 0; margin-bottom: 8px; flex: none; }
    .cr { height: 25px; display: grid; grid-template-columns: 73px 8px 36px 1fr; align-items: start; font-size: 12px; flex: none; } .cr i { height: 4px; margin-top: 8px; } .cr .field { height: 21px; margin-top: -1px; }
    .cr .pc { margin-left: 2px; color: #ddd; line-height: 18px; } .cr:nth-child(2) i { background: #0aa1d9; } .cr:nth-child(3) i { background: #dd127b; } .cr:nth-child(4) i { background: #e2d600; } .cr:nth-child(5) i { background: #262626; }
    .spec { width: 122px; height: 23px; margin-top: 29px; border: 1px solid #333; flex: none; background: linear-gradient(180deg, #fff, #fff0 50%, #0000 50%, #000), linear-gradient(90deg, #00a651, #00aeef 25%, #2e3192 50%, #ec008c 80%, #ed1c24 96%); }
    .color::after { content: ""; margin-top: auto; height: 7px; border-top: 2px solid #383838; }
    .dialog { position: absolute; left: 413px; top: 211px; width: 528px; height: 537px; }
    .mark { position: absolute; left: 1029px; top: 729px; }
    .edge { position: absolute; left: 0; top: 711px; width: 1px; height: 60px; background: #7872c4; border-top: 9px solid #62b6e8; border-bottom: 9px solid #3f94e2; }
  `];
  render() {
    const menu = ["文件(F)", "编辑(E)", "对象(O)", "文字(T)", "选择(S)", "效果(C)", "视图(V)", "窗口(W)", "帮助(H)"];
    const arrow = html`<span class="arrow">${chev()}</span>`;
    return html`
      <div class="menu">
        <span class="ai">Ai</span>${pic(20, 18, F("M10 1L19 9.8H16.5V17.5H12V12H8V17.5H3.5V9.8H1Z"))}<i class="vs"></i>
        ${menu.map((m) => html`<span class="m">${m}</span>`)}
        <i class="vs"></i>${pic(18, 14, F("M0 0H8.5V11.5H0ZM10 0H17.5V5H10ZM10 6.5H17.5V11.5H10Z"))}${chev()}
        <i class="vs"></i><span class="user">Yvonne</span>${chev()}<i class="vs"></i>
        <div class="search">${pic(17, 14, svg`<circle cx="7.5" cy="5" r="4" stroke-width="1.6"/>${S("M4.8 8L1 12.5", 2)}${F("M10.5 9.5H16.5L13.5 12.5Z")}`)}<span>${t("搜索 Adobe Stock")}</span></div>
        <div class="win"><span>${pic(12, 12, S("M1 9.500H11", 3))}</span><span>${pic(12, 12, svg`<rect x="2" y="3.5" width="8" height="6" stroke-width="2"/>`)}</span><span>${pic(12, 12, S("M2.500 2L9.500 10M9.500 2L2.500 10", 2.2))}</span></div>
      </div>
      <div class="bar">
        <i class="vgrip"></i><span class="dim">未选择对象</span><i class="vd"></i>
        <div class="field c38"><span class="fill"></span>${arrow}</div>
        <div class="field c38"><span class="fill blk"><i></i></span>${arrow}</div>
        <span class="dot">${t("描边:")}</span>
        <div class="field c81">${spin}<span class="txt">${t("0.353 m")}</span>${arrow}</div>
        <div class="field c107"><span class="fill lite">${pic(50, 6, svg`<path d="M0 3H50" stroke="#000" stroke-width="3"/>`)}等比</span>${arrow}</div>
        <div class="field c107"><span class="fill lite br">${pic(6, 6, svg`<circle cx="3" cy="3" r="2.7" fill="#000" stroke="none"/>`)}<span>${t("5 点圆形")}</span></span>${arrow}</div>
        <span class="dot">${t("不透明度:")}</span>
        <div class="field c69"><span class="txt">${t("100%")}</span><span class="arrow">${chev("right")}</span></div>
        <span>${t("样式:")}</span>
        <div class="field c38"><span class="fill lite"></span>${arrow}</div><i class="vd"></i>
        <div class="btn">文档设置</div><div class="btn">首选项</div>
        ${pic(18, 18, svg`${S("M10 1.5H15.5V7H10Z M1.5 6.5H6V12H1.5Z", 1.2)}${F("M7 5.5V17.5L10.3 14H15Z")}`)}${chev()}
        ${pic(14, 14, svg`<path d="M1 2H6V6H1ZM8 2H13V6H8ZM1 8H6V12H1ZM8 8H13V12H8Z" fill="#777" stroke="none"/>`)}
        ${pic(16, 16, svg`${F("M0 1H4V5H0ZM0 6H4V10H0ZM0 11H4V15H0Z")}${S("M6 5H11.5A2.5 2.5 0 0 1 11.5 10H6", 2.2)}`)}
        ${pic(10, 10, svg`<path d="M1.5 3L5 6.2L8.5 3" stroke="#777"/>`)}
        ${pic(12, 12, S("M0 2H2M3.5 2H12M0 6H2M3.5 6H12M0 10H2M3.5 10H12", 1.6))}
      </div>
      <div class="work">
        <tool-panel></tool-panel>
        <div class="doc">
          <div class="tabs"><div class="tab"><span>未标题-1* @ 86.2% (RGB/GPU 预览)</span>${cross}</div></div>
          <div class="mid"><div class="canvas"><div class="art"></div></div><div class="vscroll">${chev("up", 1.4)}<i></i>${chev("down", 1.4)}</div></div>
          <div class="status"><i></i><div class="field"><span class="txt">${t("86.2%")}</span>${arrow}</div>
            ${pic(40, 12, F("M9 2H11V10H9ZM17 2V10L12 6ZM31 2V10L26 6Z"))}
            <div class="pager"><div class="field p"><span class="txt">${t("1")}</span>${arrow}</div>${pic(41, 16, svg`<path d="M10 4V12L15 8ZM24 4V12L29 8ZM30 4H32V12H30Z" fill="#747474" stroke="none"/>`)}</div>
            <span class="mode">选择</span>${pic(16, 12, svg`<path d="M5 1.5V10.5L10 6Z" fill="#ccc" stroke="none"/>`)}
            <div class="hs">${chev("left", 1.4)}<i></i>${chev("right", 1.4)}</div></div>
        </div>
        <div class="docks">
          <div class="dh">${dbl()}${dbl()}<span></span>${dbl(true)}</div>
          <div class="cols"><icon-dock .groups=${iA} .active=${7}></icon-dock><i></i><icon-dock class="second" .groups=${iB}></icon-dock><i></i><props-panel></props-panel></div>
        </div>
      </div>
      <float-panel class="floating fa"><div class="icons">
        ${pic(18, 18, svg`${S("M4 4.5C8 1 16 3 16 9.5C16 11.5 15.5 13 14.5 14", 1.8)}<path d="M13.5 15C9 18 2 16 2 9" stroke-dasharray="1.5 1.7"/>${F("M1.5 2L7 4.3L2 8Z")}`)}
        ${pic(20, 16, svg`${F("M1 2V14L7.5 8Z")}<path d="M19 2V14L12.5 8Z"/><path d="M10 0V16" stroke-dasharray="2 1.5"/>`)}</div></float-panel>
      <float-panel class="floating fb" right><div class="shapes">
        ${[svg`<rect x="1.5" y="2.5" width="15" height="13"/>`, svg`<rect x="1.5" y="2.5" width="15" height="13" rx="3"/>`, svg`<ellipse cx="9" cy="9" rx="8.4" ry="6.5"/>`, svg`<path d="M5 2.5H13L17 9L13 15.5H5L1 9Z"/>`, svg`<path d="M9 1.5L11.2 6.5L16.5 7L12.5 10.7L13.7 16L9 13.3L4.3 16L5.5 10.7L1.5 7L6.8 6.5Z"/>`, svg`<circle cx="9.5" cy="9" r="7" fill="none" stroke="#8c8c8c"/><circle cx="10.500" cy="7.5" r="4.3" fill="#c8c8c8" stroke="none"/><circle cx="4" cy="14" r="2.6" fill="#535353"/><circle cx="15.500" cy="2.800" r="1.500" fill="#aaa" stroke="none"/>`].map((s) => pic(18, 18, svg`<g fill="#6e6e6e">${s}</g>`))}
      </div></float-panel>
      <float-panel class="floating fd"><div class="icons">${pic(18, 18, svg`${F("M1 13L13 1L17 5L5 17Z")}<path d="M5 10L7 12M7.5 7.5L9.5 9.5M10 5L12 7M12.5 3L14 4.5" stroke="#535353"/>`)}</div></float-panel>
      <float-panel class="floating fc"><div class="icons">
        ${pic(19, 19, F(pen))}
        ${pic(22, 19, svg`<g transform="translate(3 0)">${F(pen)}</g>${S("M0 4.5H7M3.5 1V8", 1.8)}`)}
        ${pic(21, 19, svg`<g transform="translate(2 0)">${F(pen)}</g>${S("M0 4.5H7", 1.8)}`)}
        ${pic(18, 19, S("M5 17V2L17 15"))}</div></float-panel>
      <div class="color">
        <div class="ch">${pic(42, 14, svg`${S("M3 3.5L6.5 7L3 10.5M8 3.5L11.5 7L8 10.5", 1.4)}${S("M20.5 2V12M30 3.5H40M30 7H40M30 10.5H40", 1.1)}`)}</div>
        ${[0, 1, 2, 3].map(() => html`<div class="cr"><i></i><span></span><div class="field"><span class="txt">${t("0")}</span></div><span class="pc">${t("%")}</span></div>`)}
        <div class="spec"></div>
      </div>
      <new-doc-dialog class="dialog"></new-doc-dialog>
      <i class="edge"></i>
      <svg class="mark" width="270" height="130" viewBox="1030 730 270 130" fill="#cdcdcd">
        <text x="1041" y="810" font-family="Liberation Sans" font-weight="bold" font-size="54" textLength="84" lengthAdjust="spacingAndGlyphs" stroke="#cdcdcd" stroke-width="1.5">Bai</text>
        <ellipse cx="1134" cy="764.5" rx="9" ry="11.5"/><ellipse cx="1151.3" cy="748" rx="8.5" ry="12"/><ellipse cx="1172.7" cy="749" rx="9" ry="11.5" transform="rotate(12 1172.7 749)"/><ellipse cx="1186" cy="770" rx="9" ry="11"/>
        <path d="M1160 767C1171 767 1173 777 1180 783C1187 788 1190 793 1189.5 799C1188 810 1181 813 1171 811Q1160 809 1149 811C1138 813 1131 809 1130 799C1129.500 792 1134 787 1139 783C1147 776 1149 767 1160 767Z"/>
        <text x="1138" y="804" fill="#535353" font-family="Liberation Sans" font-weight="bold" font-size="34" textLength="41" lengthAdjust="spacingAndGlyphs">du</text>
        <text x="1197" y="807" font-family="Noto Sans CJK SC" font-weight="900" font-size="42" textLength="84" lengthAdjust="spacingAndGlyphs" stroke="#cdcdcd" stroke-width="1">经验</text>
        <text x="1044" y="842" font-family="Open Sans" font-weight="500" font-size="29" textLength="240" lengthAdjust="spacingAndGlyphs" fill="#e0e0e0" stroke="#e0e0e0" stroke-width=".5">jingyan.baidu.com</text>
      </svg>`;
  }
}
